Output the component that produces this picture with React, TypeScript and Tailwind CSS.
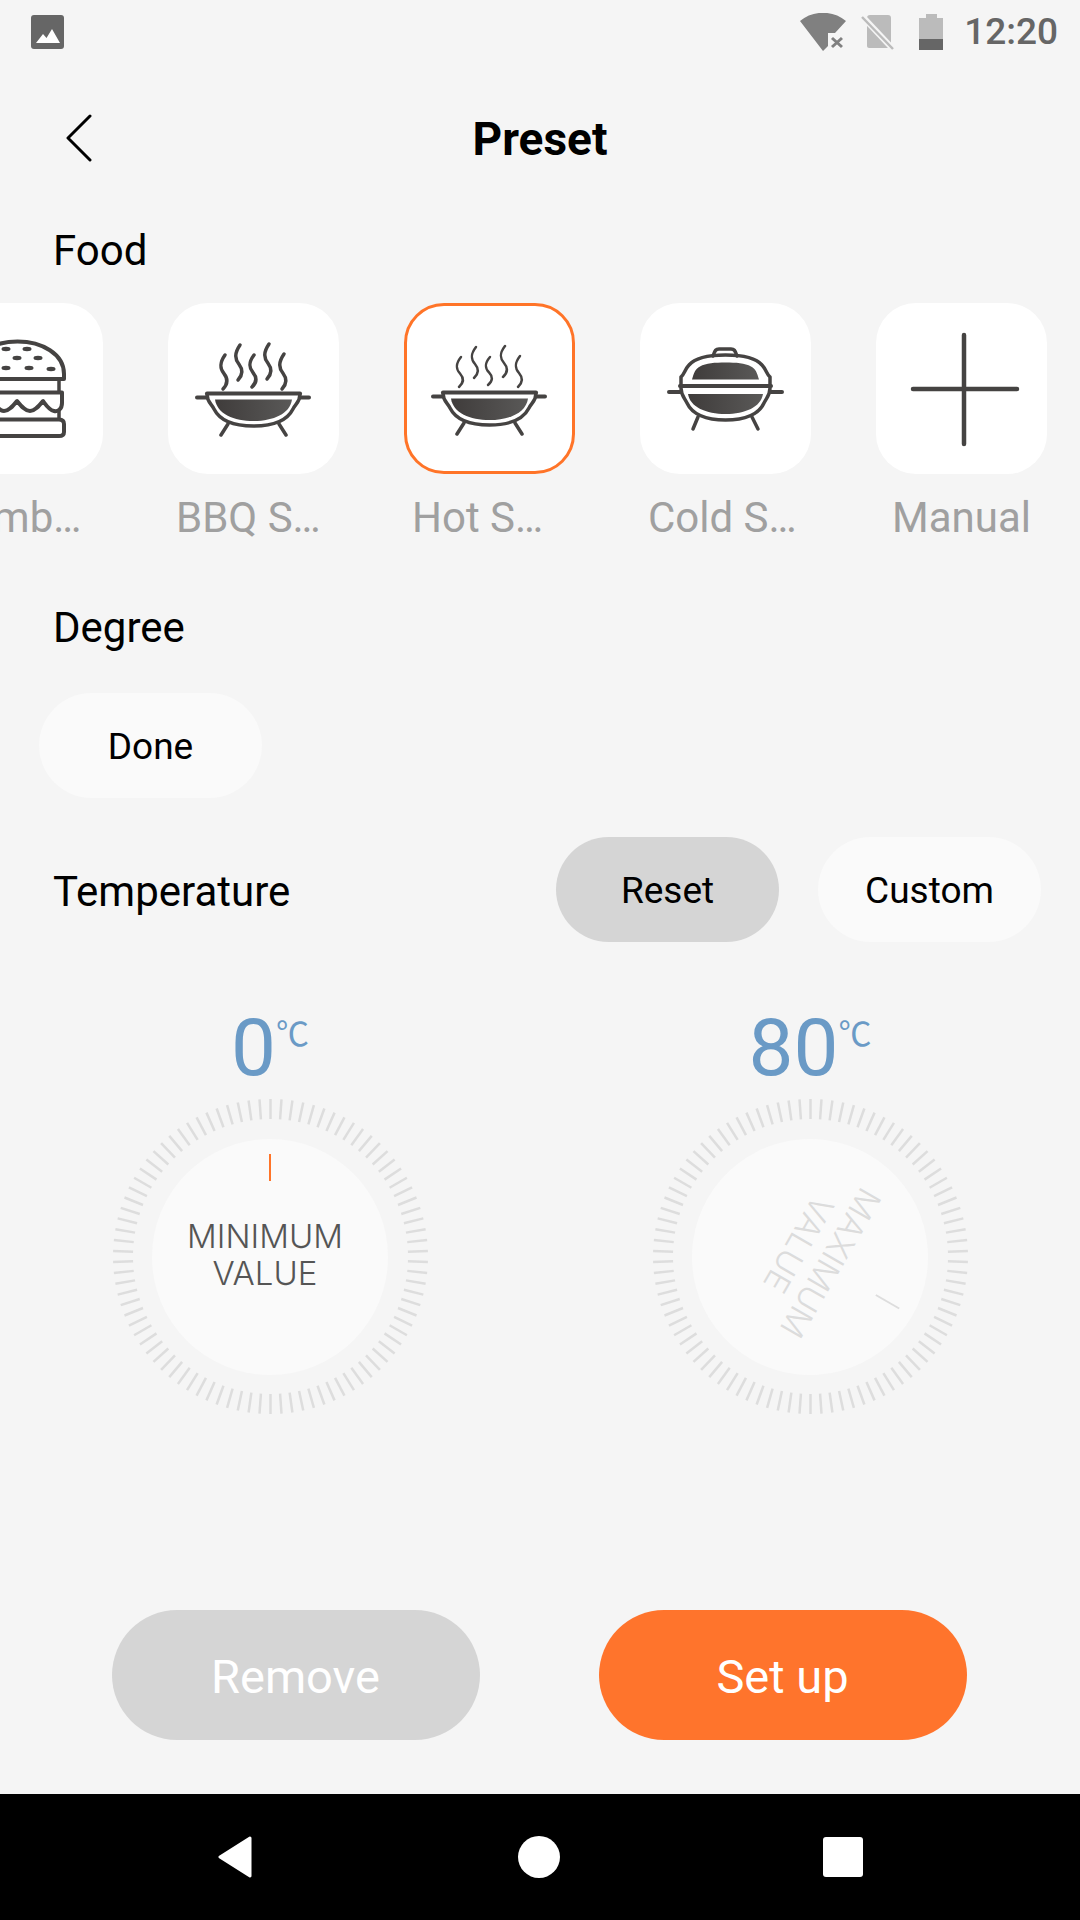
import React from "react";

const INK = "#454342";

function Pan() {
  return (
    <linearGradient id="pan" x1="0" x2="1" y1="0" y2="0">
      <stop offset="0" stopColor="#3f3c3b" />
      <stop offset="1" stopColor="#5a5958" />
    </linearGradient>
  );
}

const steamLines = [
  [56, 52, 86],
  [71, 42, 77],
  [85, 52, 84],
  [100, 41, 76],
  [115, 51, 86],
];

function Grill({ thin }: { thin?: boolean }) {
  return (
    <svg viewBox={thin ? "3 3 165 165" : "0 0 171 171"} className="w-full h-full" fill="none" stroke={INK} strokeLinecap="round" strokeLinejoin="round">
      <defs>
        <Pan />
      </defs>
      <g transform={thin ? "translate(0 -1)" : undefined}>
        {steamLines.map(([x, top, bottom]) => {
          const y0 = thin ? top + 3 : top;
          const y1 = thin ? bottom - 1 : bottom;
          const h = y1 - y0;
          return (
            <path
              key={x}
              strokeWidth={thin ? 2.5 : 3.5}
              d={`M${x + 1} ${y0} C${x - 5} ${y0 + h * 0.25} ${x - 4} ${y0 + h * 0.4} ${x} ${y0 + h * 0.55} C${x + 4} ${y0 + h * 0.7} ${x + 4} ${y0 + h * 0.85} ${x - 1} ${y1}`}
            />
          );
        })}
        <path strokeWidth="4" d="M39 90.500H132" />
        <path strokeWidth="4" d="M29 94.500H39M132 94.500H141" />
        <path strokeWidth="3.500" d="M39 91C39 99 43 100 46 106C52 118 66 123 85.500 123C105 123 119 118 125 106C128 100 132 99 132 91" />
        <path fill="url(#pan)" stroke="none" d="M47 96.500H124C122 111 105 118 85.500 118C66 118 49 111 47 96.500Z" />
        <path strokeWidth="3.500" d="M60 121L53 132M111 121L118 132" />
      </g>
    </svg>
  );
}

function ColdGrill() {
  return (
    <svg viewBox="0 0 171 171" className="w-full h-full" fill="none" stroke={INK} strokeLinecap="round" strokeLinejoin="round">
      <defs>
        <Pan />
      </defs>
      <path strokeWidth="3.500" d="M73 53C75 47 76 46 79 46H91C94 46 95 47 97 53" />
      <path strokeWidth="3.500" d="M41 82V74C44 72 45 66 49 62C55 55 70 52 85.500 52C101 52 116 55 122 62C126 66 127 72 130 74V82" />
      <path fill="url(#pan)" stroke="none" d="M52 76.500C54 70 55 66 60 63.500C66 60 75 59.500 85.500 59.500C96 59.500 105 60 111 63.500C116 66 117 70 119 76.500Z" />
      <path strokeWidth="4" d="M40 83H131" />
      <path strokeWidth="4" d="M29 89H40M131 89H142" />
      <path strokeWidth="3.500" d="M41 85C41 92 44 94 47 100C52 111 66 117 85.500 117C105 117 119 111 124 100C127 94 130 92 130 85" />
      <path fill="url(#pan)" stroke="none" d="M48 91H123C121 104 105 111 85.500 111C66 111 50 104 48 91Z" />
      <path strokeWidth="3.500" d="M58 114L53 126M112 114L118 126" />
    </svg>
  );
}

function Burger() {
  const seeds = [
    [74, 46],
    [95, 46],
    [85, 55],
    [106, 55],
    [74, 65],
    [97, 65],
    [119, 66],
    [52, 66],
    [63, 55],
  ];
  return (
    <svg viewBox="0 0 171 171" className="w-full h-full" fill="none" stroke={INK} strokeLinecap="round" strokeLinejoin="round">
      <path strokeWidth="4" d="M39 76V71C39 51 61 38.500 85.500 38.500C110 38.500 132 51 132 71V76Z" />
      {seeds.map(([x, y]) => (
        <ellipse key={`${x}-${y}`} cx={x} cy={y} rx="4.500" ry="2.200" fill={INK} stroke="none" />
      ))}
      <path strokeWidth="3.500" d="M44 76V89M127 76V89" />
      <path strokeWidth="4" d="M41 89.500H130V100C130 106 126 109 122 108C117 107 114 102 111 98C107 103 103 108 98 108C93 108 89 103 85 98C81 103 77 108 72 108C67 108 64 103 60 98C57 102 54 107 49 108C45 109 41 106 41 100Z" />
      <path strokeWidth="3.500" d="M44 107V116M127 107V116" />
      <path strokeWidth="4" d="M44 116.500H127C130 116.500 132 118 132 121V129C132 132 130 133 127 133H44C41 133 39 132 39 129V121C39 118 41 116.500 44 116.500Z" />
    </svg>
  );
}

function PlusIcon() {
  return (
    <svg viewBox="0 0 171 171" className="w-full h-full" fill="none" stroke={INK} strokeWidth="4.500" strokeLinecap="round">
      <path d="M88 32V141M37 86H141" />
    </svg>
  );
}

const foods = [
  { name: "Hamb…", icon: <Burger /> },
  { name: "BBQ S…", icon: <Grill /> },
  { name: "Hot S…", icon: <Grill thin />, active: true },
  { name: "Cold S…", icon: <ColdGrill /> },
  { name: "Manual", icon: <PlusIcon />, center: true },
];

function Dial({ value, label, angle, dim }: { value: string; label: string; angle: number; dim?: boolean }) {
  return (
    <div className="flex flex-col items-center">
      <div className="h-[80px] flex items-start justify-center text-[#6a9ac6]">
        <span className="text-[80px] leading-[84px]">{value}</span>
        <span className="text-[33px] leading-[36px] mt-[8px] font-['Noto_Sans_CJK_SC',sans-serif]">℃</span>
      </div>
      <div className="relative w-[315px] h-[315px] mt-[13px] flex items-center justify-center">
        <svg viewBox="0 0 315 315" className="absolute inset-0 w-full h-full">
          {Array.from({ length: 90 }).map((_, i) => (
            <line key={i} x1="157.500" y1="0" x2="157.500" y2="20" stroke="#dddddd" strokeWidth="2.500" transform={`rotate(${i * 4} 157.500 157.500)`} />
          ))}
        </svg>
        <div
          className="w-[236px] h-[236px] rounded-full bg-[#fafafa] flex flex-col items-center pt-[15px]"
          style={{ transform: `rotate(${angle}deg)` }}
        >
          <div className={`w-[2px] h-[27px] shrink-0 ${dim ? "bg-[#dddddd]" : "bg-[#ff7428]"}`} />
          <div className={`mt-[37px] mr-[10px] text-center text-[33px] leading-[37px] font-light font-[Inter,sans-serif] ${dim ? "text-[#dcdcdc]" : "text-[#555555]"}`}>
            {label}
            <br />
            VALUE
          </div>
        </div>
      </div>
    </div>
  );
}

export default function App() {
  return (
    <div className="w-[1080px] h-[1920px] bg-[#f5f5f5] flex flex-col overflow-hidden font-[Roboto,sans-serif] text-black">
      {/* status bar */}
      <div className="h-[63px] flex items-center pl-[31px] pr-[22px]">
        <svg width="33" height="34" viewBox="0 0 33 34">
          <rect width="33" height="34" rx="3" fill="#666666" />
          <path d="M5 28L12 19L15.500 23L21 14L29 28Z" fill="#ffffff" />
        </svg>
        <div className="ml-auto flex items-center">
          <svg width="46" height="38" viewBox="0 0 46 38">
            <path d="M0 8C13 -3 33 -3 46 8L35 20H28V33L23 38Z" fill="#808080" />
            <path d="M32 25L42 34M42 25L32 34" stroke="#808080" strokeWidth="3" />
          </svg>
          <svg width="34" height="36" viewBox="0 0 34 36" className="ml-[15px]">
            <path d="M6 4C6 2 7 1 9 1H27C29 1 30 2 30 4V32C30 33 29 34 28 34H8C7 34 6 33 6 32Z" fill="#bbbbbb" />
            <path d="M0 1L32 35" stroke="#f5f5f5" strokeWidth="6" />
            <path d="M1 3L32 35" stroke="#bbbbbb" strokeWidth="2.500" />
          </svg>
          <div className="ml-[24px] w-[24px] h-[36px] flex flex-col items-center">
            <div className="w-[11px] h-[4px] bg-[#bbbbbb]" />
            <div className="w-full h-[21px] bg-[#bbbbbb]" />
            <div className="w-full h-[11px] bg-[#666666]" />
          </div>
          <span className="ml-[21px] text-[37px] leading-[40px] font-medium text-[#666666]">12:20</span>
        </div>
      </div>

      {/* header */}
      <div className="h-[150px] grid grid-cols-[1fr_auto_1fr] items-center">
        <svg width="26" height="48" viewBox="0 0 26 48" className="ml-[66px]" fill="none" stroke="#000000" strokeWidth="3" strokeLinecap="round" strokeLinejoin="round">
          <path d="M24 2L2 24L24 46" />
        </svg>
        <h1 className="text-[46px] leading-[52px] font-bold pt-[1px]">Preset</h1>
        <div />
      </div>

      {/* food */}
      <div className="h-[74px] pl-[53px] text-[42px] leading-[76px]">Food</div>
      <div className="mt-[16px] -ml-[68px] flex gap-[65px]">
        {foods.map((food) => (
          <div key={food.name} className="w-[171px] shrink-0">
            <div className={`w-[171px] h-[171px] rounded-[40px] bg-white ${food.active ? "border-[3px] border-[#ff7428]" : ""}`}>
              {food.icon}
            </div>
            <div className={`h-[86px] px-[8px] whitespace-nowrap text-[42px] leading-[88px] text-[#a0a0a0] ${food.center ? "text-center" : ""}`}>{food.name}</div>
          </div>
        ))}
      </div>

      {/* degree */}
      <div className="mt-[37px] h-[60px] pl-[53px] text-[42px] leading-[62px]">Degree</div>
      <div className="mt-[36px] ml-[39px] w-[223px] h-[105px] rounded-full bg-[#fafafa] flex items-center justify-center text-[37px] pt-[3px]">Done</div>

      {/* temperature */}
      <div className="mt-[39px] h-[105px] pl-[53px] pr-[39px] flex items-center">
        <span className="text-[42px] pt-[4px]">Temperature</span>
        <div className="ml-auto w-[223px] h-[105px] rounded-full bg-[#d5d5d5] flex items-center justify-center text-[37px] pt-[3px]">Reset</div>
        <div className="ml-[39px] w-[223px] h-[105px] rounded-full bg-[#fafafa] flex items-center justify-center text-[37px] pt-[3px]">Custom</div>
      </div>

      <div className="mt-[64px] grid grid-cols-2">
        <Dial value="0" label="MINIMUM" angle={0} />
        <Dial value="80" label="MAXIMUM" angle={120} dim />
      </div>

      {/* actions */}
      <div className="mt-[196px] pr-[2px] flex justify-center gap-[119px]">
        <button className="w-[368px] h-[130px] rounded-full bg-[#d5d5d5] text-white text-[47px] pt-[5px]">Remove</button>
        <button className="w-[368px] h-[130px] rounded-full bg-[#ff742c] text-white text-[47px] pt-[5px]">Set up</button>
      </div>

      {/* nav bar */}
      <div className="mt-auto h-[126px] bg-black flex items-center justify-center">
        <svg width="36" height="42" viewBox="0 0 36 42" className="mr-[265px]">
          <path d="M33 2L3 21L33 40Z" fill="#ffffff" stroke="#ffffff" strokeWidth="3" strokeLinejoin="round" />
        </svg>
        <div className="w-[42px] h-[42px] rounded-full bg-white" />
        <div className="ml-[263px] w-[40px] h-[40px] rounded-[3px] bg-white" />
      </div>
    </div>
  );
}
